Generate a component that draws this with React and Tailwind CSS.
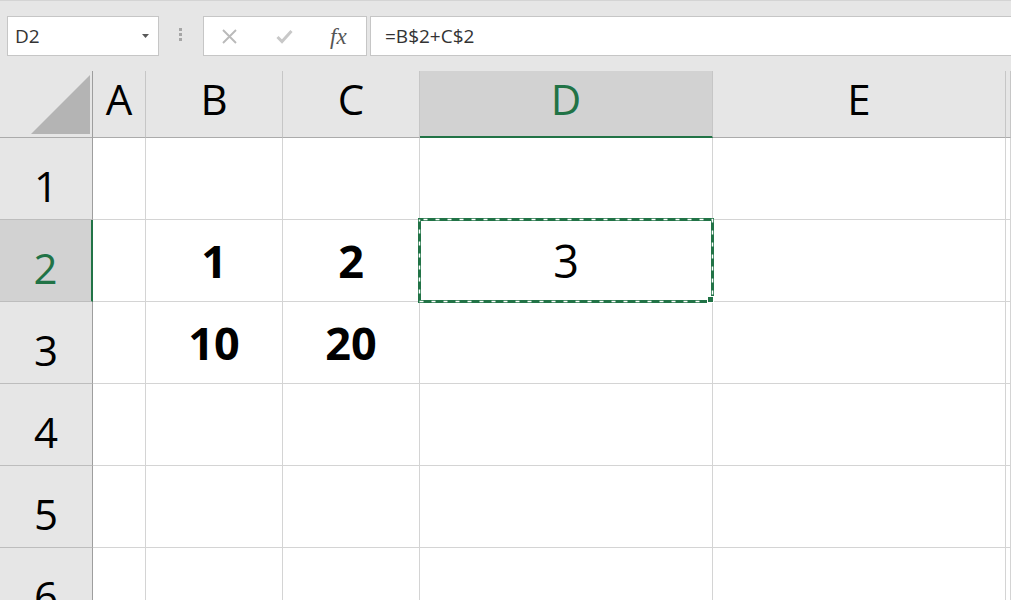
import React from "react";

const cols = ["A", "B", "C", "D", "E", ""];

function HeaderCell({ label, active }) {
  return (
    <div
      className={
        "flex items-center justify-center pb-[10px] border-r border-r-[#c6c6c6] leading-none text-[42px] " +
        (active
          ? "bg-[#d2d2d2] border-b-2 border-b-[#217346] text-[#217346]"
          : "bg-[#e6e6e6] border-b border-b-[#ababab] text-black")
      }
    >
      {label}
    </div>
  );
}

function RowHeader({ n, active }) {
  return (
    <div
      className={
        "flex items-center justify-center pt-[15px] border-b border-b-[#bdbdbd] leading-none text-[42px] " +
        (active
          ? "bg-[#d2d2d2] border-r-2 border-r-[#217346] text-[#217346]"
          : "bg-[#e6e6e6] border-r border-r-[#9e9e9e] text-black")
      }
    >
      {n}
    </div>
  );
}

function Cell({ children, bold }) {
  return (
    <div
      className={
        "flex items-center justify-center bg-white border-r border-b border-[#d4d4d4] leading-none text-[45px] text-black " +
        (bold ? "font-bold" : "")
      }
    >
      {children}
    </div>
  );
}

function SelectedCell({ children }) {
  return (
    <div className="relative flex items-center justify-center bg-white border-r border-b border-[#d4d4d4] leading-none text-[45px] text-black">
      {children}
      <div className="absolute left-[-2px] top-[-2px] right-[-1px] bottom-[-1px] pointer-events-none">
        <svg width="296" height="85" className="block">
          <rect x="1.5" y="1.5" width="293" height="82" fill="none" stroke="#217346" strokeWidth="3" />
          <rect x="1.5" y="1.5" width="293" height="82" fill="none" stroke="#ffffff" strokeWidth="1.5" strokeDasharray="4 8" strokeDashoffset="-4" />
        </svg>
        <div className="absolute right-[-1px] bottom-[-1px] w-[7px] h-[7px] bg-[#217346] border border-white" />
      </div>
    </div>
  );
}

const data = {
  2: { B: ["1", true], C: ["2", true] },
  3: { B: ["10", true], C: ["20", true] },
};

export default function App() {
  return (
    <div className="w-[1011px] h-[600px] overflow-hidden bg-[#e6e6e6] font-['Open_Sans',sans-serif]">
      {/* toolbar */}
      <div className="h-[71px] border-t border-[#d4d4d4] flex items-start pt-[15px]">
        <div className="ml-[7px] w-[152px] h-[40px] bg-white border border-[#c6c6c6] flex items-center pl-[7px] pr-[9px]">
          <span className="text-[19px] text-[#333] leading-none">D2</span>
          <svg width="7" height="4" className="ml-auto" viewBox="0 0 7 4">
            <path d="M0 0 L7 0 L3.5 4 Z" fill="#595959" />
          </svg>
        </div>
        <div className="ml-[20px] mt-[12px] flex flex-col gap-[2px]">
          <div className="w-[3px] h-[3px] bg-[#a6a6a6]" />
          <div className="w-[3px] h-[3px] bg-[#a6a6a6]" />
          <div className="w-[3px] h-[3px] bg-[#a6a6a6]" />
        </div>
        <div className="ml-[21px] w-[164px] h-[40px] bg-white border border-[#c6c6c6] flex items-center pl-[18px]">
          <svg width="15" height="15" viewBox="0 0 15 15">
            <path d="M1 1 L14 14 M14 1 L1 14" stroke="#bababa" strokeWidth="1.9" fill="none" />
          </svg>
          <svg width="17" height="15" viewBox="0 0 17 15" className="ml-[39px]">
            <path d="M1.5 8 L6 12.5 L15.5 2" stroke="#c8c8c8" strokeWidth="3" fill="none" />
          </svg>
          <span className="ml-[37px] font-['Liberation_Serif',serif] italic text-[23px] text-[#555] leading-none">
            fx
          </span>
        </div>
        <div className="ml-[3px] flex-1 h-[40px] bg-white border border-r-0 border-[#c6c6c6] flex items-center pl-[14px]">
          <span className="text-[19px] text-[#333] leading-none">=B$2+C$2</span>
        </div>
      </div>

      {/* grid */}
      <div className="grid grid-cols-[93px_53px_137px_137px_293px_293px_1fr] grid-rows-[67px_repeat(6,82px)]">
        <div className="bg-[#e6e6e6] border-r border-r-[#9e9e9e] border-b border-b-[#ababab] flex justify-end items-end pr-[2px] pb-[3px]">
          <svg width="59" height="59" viewBox="0 0 59 59" className="block">
            <path d="M0 59 L59 59 L59 0 Z" fill="#b4b4b4" />
          </svg>
        </div>
        {cols.map((c) => (
          <HeaderCell key={"h" + c} label={c} active={c === "D"} />
        ))}
        {[1, 2, 3, 4, 5, 6].map((r) => (
          <React.Fragment key={r}>
            <RowHeader n={r} active={r === 2} />
            {cols.map((c) => {
              if (r === 2 && c === "D") return <SelectedCell key={c}>3</SelectedCell>;
              const v = data[r] && data[r][c];
              return (
                <Cell key={c} bold={v && v[1]}>
                  {v ? v[0] : null}
                </Cell>
              );
            })}
          </React.Fragment>
        ))}
      </div>
    </div>
  );
}
